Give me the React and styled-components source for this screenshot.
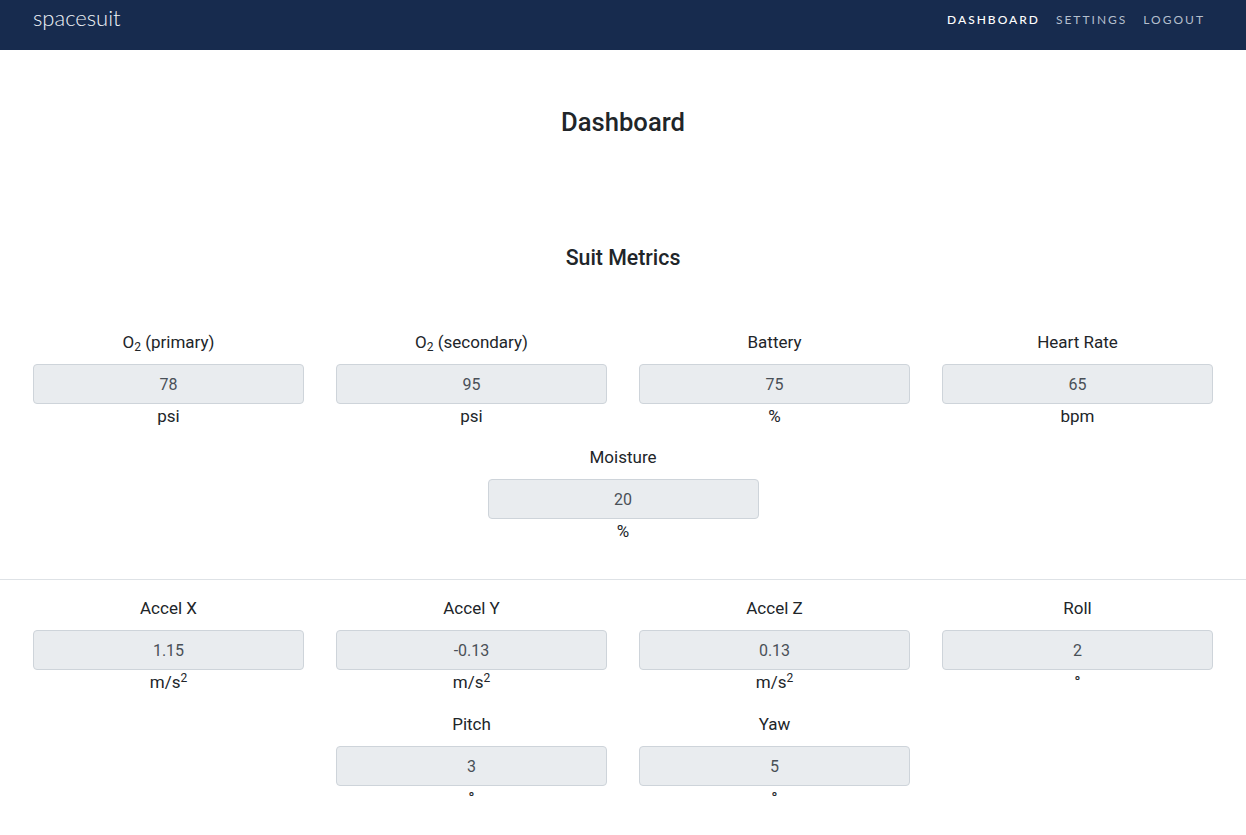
import React from "react";
import styled, { createGlobalStyle } from "styled-components";

const Global = createGlobalStyle`
  html, body { margin: 0; padding: 0; background: #fff; }
  body { font-family: Roboto, "Liberation Sans", sans-serif; color: #212529; }
  * { box-sizing: border-box; }
`;

const NavBar = styled.nav`
  height: 50px;
  background: #172b4e;
  display: flex;
  align-items: flex-start;
  justify-content: space-between;
  padding: 0 33px;
`;

const Brand = styled.div`
  font-family: Lato, "Open Sans", sans-serif;
  font-weight: 300;
  font-size: 22px;
  line-height: 26px;
  color: #eef2f7;
  padding-top: 5px;
`;

const NavLinks = styled.div`
  display: flex;
  padding-top: 12px;
`;

const NavLink = styled.a`
  font-family: Lato, sans-serif;
  font-size: 12px;
  line-height: 16px;
  letter-spacing: 2px;
  text-transform: uppercase;
  padding: 0 8px;
  color: ${(p) => (p.$active ? "#ffffff" : "#b4bfcd")};
  font-weight: ${(p) => (p.$active ? 500 : 400)};
  text-decoration: none;
  cursor: pointer;
`;

const Main = styled.main`
  display: flex;
  flex-direction: column;
  align-items: center;
`;

const PageTitle = styled.h1`
  margin: 58px 0 0;
  font-size: 25.6px;
  font-weight: 500;
  line-height: 29px;
  color: #212529;
`;

const SectionTitle = styled.h2`
  margin: 109px 0 0;
  font-size: 21.3px;
  font-weight: 500;
  line-height: 24px;
  color: #212529;
`;

const Grid = styled.div`
  width: 1180px;
  display: flex;
  flex-wrap: wrap;
  justify-content: center;
  gap: ${(p) => p.$rowGap}px 32px;
  margin-top: ${(p) => p.$top}px;
`;

const Metric = styled.div`
  width: 271px;
  display: flex;
  flex-direction: column;
  align-items: center;
`;

const Label = styled.div`
  font-size: 17px;
  line-height: 24px;
  margin-bottom: 10px;
  color: #212529;
`;

const ValueBox = styled.div`
  width: 100%;
  height: 40px;
  background: #e9ecef;
  border: 1px solid #ced4da;
  border-radius: 4px;
  display: flex;
  align-items: center;
  justify-content: center;
  font-size: 16px;
  color: #495057;
`;

const Unit = styled.div`
  font-size: 17px;
  line-height: 24px;
  height: 24px;
  color: #212529;
  sup { font-size: 12px; line-height: 0; vertical-align: 6px; }
`;

const Divider = styled.hr`
  width: 100%;
  border: 0;
  border-top: 1px solid #dee2e6;
  margin: 36px 0 0;
`;

const Sub = styled.sub`
  font-size: 12px;
  line-height: 0;
  vertical-align: -3px;
`;

const O2 = ({ children }) => (
  <>
    O<Sub>2</Sub> {children}
  </>
);

const sq = (
  <>
    m/s<sup>2</sup>
  </>
);

const group1 = [
  { label: <O2>(primary)</O2>, value: "78", unit: "psi" },
  { label: <O2>(secondary)</O2>, value: "95", unit: "psi" },
  { label: "Battery", value: "75", unit: "%" },
  { label: "Heart Rate", value: "65", unit: "bpm" },
  { label: "Moisture", value: "20", unit: "%" },
];

const group2 = [
  { label: "Accel X", value: "1.15", unit: sq },
  { label: "Accel Y", value: "-0.13", unit: sq },
  { label: "Accel Z", value: "0.13", unit: sq },
  { label: "Roll", value: "2", unit: "°" },
  { label: "Pitch", value: "3", unit: "°" },
  { label: "Yaw", value: "5", unit: "°" },
];

const MetricGrid = ({ items, top, rowGap }) => (
  <Grid $top={top} $rowGap={rowGap}>
    {items.map((m, i) => (
      <Metric key={i}>
        <Label>{m.label}</Label>
        <ValueBox>{m.value}</ValueBox>
        <Unit>{m.unit}</Unit>
      </Metric>
    ))}
  </Grid>
);

export default function App() {
  return (
    <>
      <Global />
      <NavBar>
        <Brand>spacesuit</Brand>
        <NavLinks>
          <NavLink $active>Dashboard</NavLink>
          <NavLink>Settings</NavLink>
          <NavLink>Logout</NavLink>
        </NavLinks>
      </NavBar>
      <Main>
        <PageTitle>Dashboard</PageTitle>
        <SectionTitle>Suit Metrics</SectionTitle>
        <MetricGrid items={group1} top={60} rowGap={17} />
        <Divider />
        <MetricGrid items={group2} top={16} rowGap={18} />
      </Main>
    </>
  );
}
